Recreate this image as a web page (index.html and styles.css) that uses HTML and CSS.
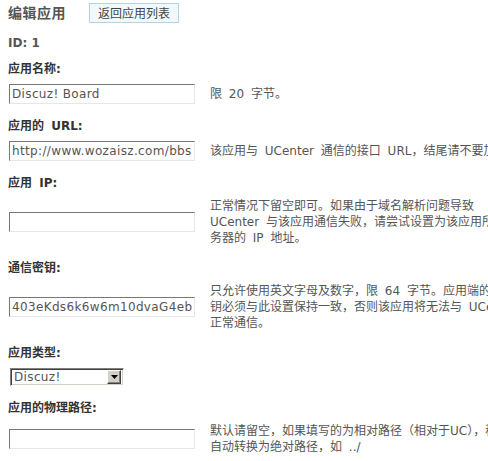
FILE: index.html
```html
<!DOCTYPE html>
<html lang="zh-CN">
  <head>
    <meta charset="UTF-8" />
    <meta name="viewport" content="width=device-width, initial-scale=1.0" />
    <title>编辑应用</title>
    <link rel="stylesheet" href="styles.css">
  </head>
  <body>
    <div class="container">
      <div class="header">
        <h3>编辑应用</h3>
        <button class="backBtn">返回应用列表</button>
      </div>
      <table class="opt">
        <tr>
          <th colspan="2" class="idRow">ID: 1</th>
        </tr>
        <tr>
          <th colspan="2">应用名称:</th>
        </tr>
        <tr>
          <td class="inputCell"><input type="text" class="txt" value="Discuz! Board" /></td>
          <td class="notice">限 20 字节。</td>
        </tr>
        <tr>
          <th colspan="2">应用的 URL:</th>
        </tr>
        <tr>
          <td class="inputCell"><input type="text" class="txt" value="http://www.wozaisz.com/bbs" /></td>
          <td class="notice">该应用与 UCenter 通信的接口 URL，结尾请不要加“/”，应用的通知只发送给主 URL 地址</td>
        </tr>
        <tr>
          <th colspan="2">应用 IP:</th>
        </tr>
        <tr>
          <td class="inputCell"><input type="text" class="txt" value="" /></td>
          <td class="notice">正常情况下留空即可。如果由于域名解析问题导致<br />UCenter 与该应用通信失败，请尝试设置为该应用所在服<br />务器的 IP 地址。</td>
        </tr>
        <tr>
          <th colspan="2">通信密钥:</th>
        </tr>
        <tr>
          <td class="inputCell"><input type="text" class="txt" value="403eKds6k6w6m10dvaG4eb1" /></td>
          <td class="notice">只允许使用英文字母及数字，限 64 字节。应用端的通信密<br />钥必须与此设置保持一致，否则该应用将无法与 UCenter<br />正常通信。</td>
        </tr>
        <tr>
          <th colspan="2">应用类型:</th>
        </tr>
        <tr>
          <td class="inputCell">
            <div class="selectBox">
              <span class="selectText">Discuz!</span>
              <span class="selectArrow">
                <svg width="7" height="4" viewBox="0 0 7 4"><path d="M0 0h7L3.5 4z" fill="#000" /></svg>
              </span>
            </div>
          </td>
          <td class="notice"></td>
        </tr>
        <tr>
          <th colspan="2">应用的物理路径:</th>
        </tr>
        <tr>
          <td class="inputCell"><input type="text" class="txt" value="" /></td>
          <td class="notice">默认请留空，如果填写的为相对路径（相对于UC），程序会<br />自动转换为绝对路径，如 ../</td>
        </tr>
      </table>
    </div>
  </body>
</html>
```
FILE: styles.css
```css
html {
  overflow: hidden;
}
body {
  margin: 0;
  padding: 0 8px;
  font-family: "DejaVu Sans", "Noto Sans CJK SC", sans-serif;
  font-size: 12px;
  color: #555;
  background-color: #fff;
}
.header {
  display: flex;
  align-items: center;
  gap: 23px;
  padding-top: 3px;
  height: 20px;
}
.header h3 {
  margin: 0;
  font-size: 14px;
  font-weight: bold;
  color: #555;
  line-height: 20px;
  letter-spacing: 0.5px;
}
.backBtn {
  height: 20px;
  padding: 0 8px;
  border: 1px solid #b3d3e0;
  background-color: #f2f9fc;
  color: #444;
  font-family: "Noto Sans CJK SC", sans-serif;
  font-size: 12px;
  line-height: 18px;
}
.opt {
  border-collapse: collapse;
  white-space: nowrap;
}
.opt th {
  text-align: left;
  font-weight: bold;
  color: #333;
  line-height: 16px;
  padding: 11px 0 4px;
  word-spacing: 3px;
}
.opt th.idRow {
  color: #555;
  line-height: 14px;
  padding: 13px 0 0;
  word-spacing: 0;
}
.opt td {
  padding: 3px 0;
  vertical-align: middle;
}
.inputCell {
  padding-left: 1px !important;
  padding-right: 15px !important;
}
.notice {
  line-height: 16px;
  color: #555;
  word-spacing: 3px;
}
.txt {
  display: block;
  box-sizing: border-box;
  width: 186px;
  height: 20px;
  margin: 0;
  padding: 0 2px;
  border: 1px solid #e6e6e6;
  border-top-color: #777;
  border-left-color: #777;
  font-family: "DejaVu Sans", sans-serif;
  font-size: 12px;
  letter-spacing: 0.35px;
  color: #555;
  background: #fff;
}
.selectBox {
  display: flex;
  align-items: center;
  box-sizing: border-box;
  width: 114px;
  height: 18px;
  margin-left: 1px;
  border: 1px solid #fff;
  border-top-color: #808080;
  border-left-color: #808080;
  box-shadow: inset 1px 1px #404040, inset -1px -1px #d4d0c8;
  background: #fff;
}
.selectText {
  flex: 1;
  padding-left: 3px;
  line-height: 14px;
  letter-spacing: 0.35px;
  color: #555;
}
.selectArrow {
  display: flex;
  align-items: center;
  justify-content: center;
  box-sizing: border-box;
  width: 14px;
  height: 14px;
  margin-right: 2px;
  background: #d4d0c8;
  border: 1px solid #404040;
  border-top-color: #fff;
  border-left-color: #fff;
  box-shadow: inset -1px -1px #808080;
}
```
